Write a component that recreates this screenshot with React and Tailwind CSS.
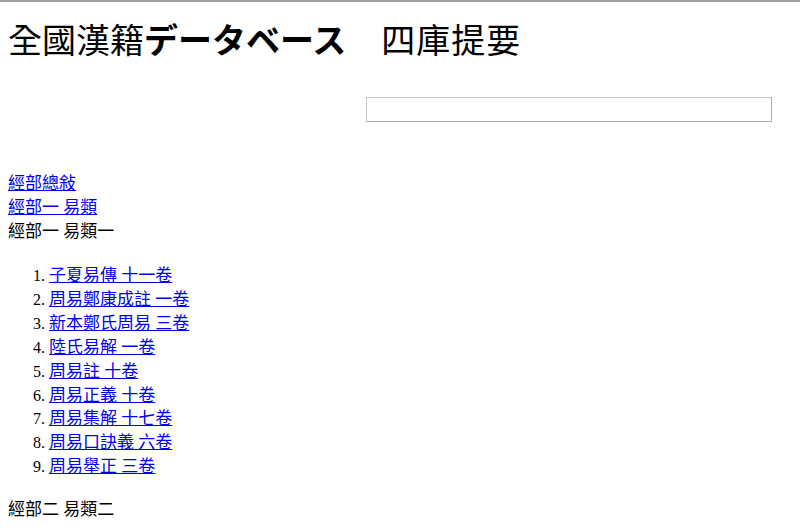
export default function App() {
  const items = [
    "子夏易傳 十一卷",
    "周易鄭康成註 一卷",
    "新本鄭氏周易 三卷",
    "陸氏易解 一卷",
    "周易註 十卷",
    "周易正義 十卷",
    "周易集解 十七卷",
    "周易口訣義 六卷",
    "周易舉正 三卷",
  ];
  return (
    <div className="min-h-[530px] bg-white border-t-2 border-[#a0a0a0] font-['Liberation_Serif','Noto_Sans_CJK_TC',serif] text-black text-[16px]">
      <h1 className="px-2 pt-[13px] text-[34px] leading-[48px] font-normal whitespace-nowrap">
        {"全國漢籍"}
        <span className="font-bold font-['Noto_Sans_CJK_JP',sans-serif]">データベース</span>
        <span className="tracking-[1px]">{"\u3000四庫提要"}</span>
      </h1>
      <div className="flex justify-end pr-[28px] mt-[31px]">
        <input
          type="text"
          className="w-[406px] h-[25px] border border-[#a9a9a9] border-t-[#c8c8c8] border-l-[#c8c8c8] bg-white outline-none"
        />
      </div>
      <div className="px-2 mt-[50px] leading-[24px] text-[17px]">
        <div>
          <a href="#" className="text-[#0000ee] underline">經部總敍 </a>
        </div>
        <div>
          <a href="#" className="text-[#0000ee] underline">經部一 易類</a>
        </div>
        <div>經部一 易類一</div>
        <ol className="list-decimal pl-[41px] mt-[20px] mb-[19px] text-[16px] leading-[23.9px]">
          {items.map((t) => (
            <li key={t}>
              <a href="#" className="text-[#0000ee] underline text-[17px]">{t}</a>
            </li>
          ))}
        </ol>
        <div>經部二 易類二</div>
      </div>
    </div>
  );
}
